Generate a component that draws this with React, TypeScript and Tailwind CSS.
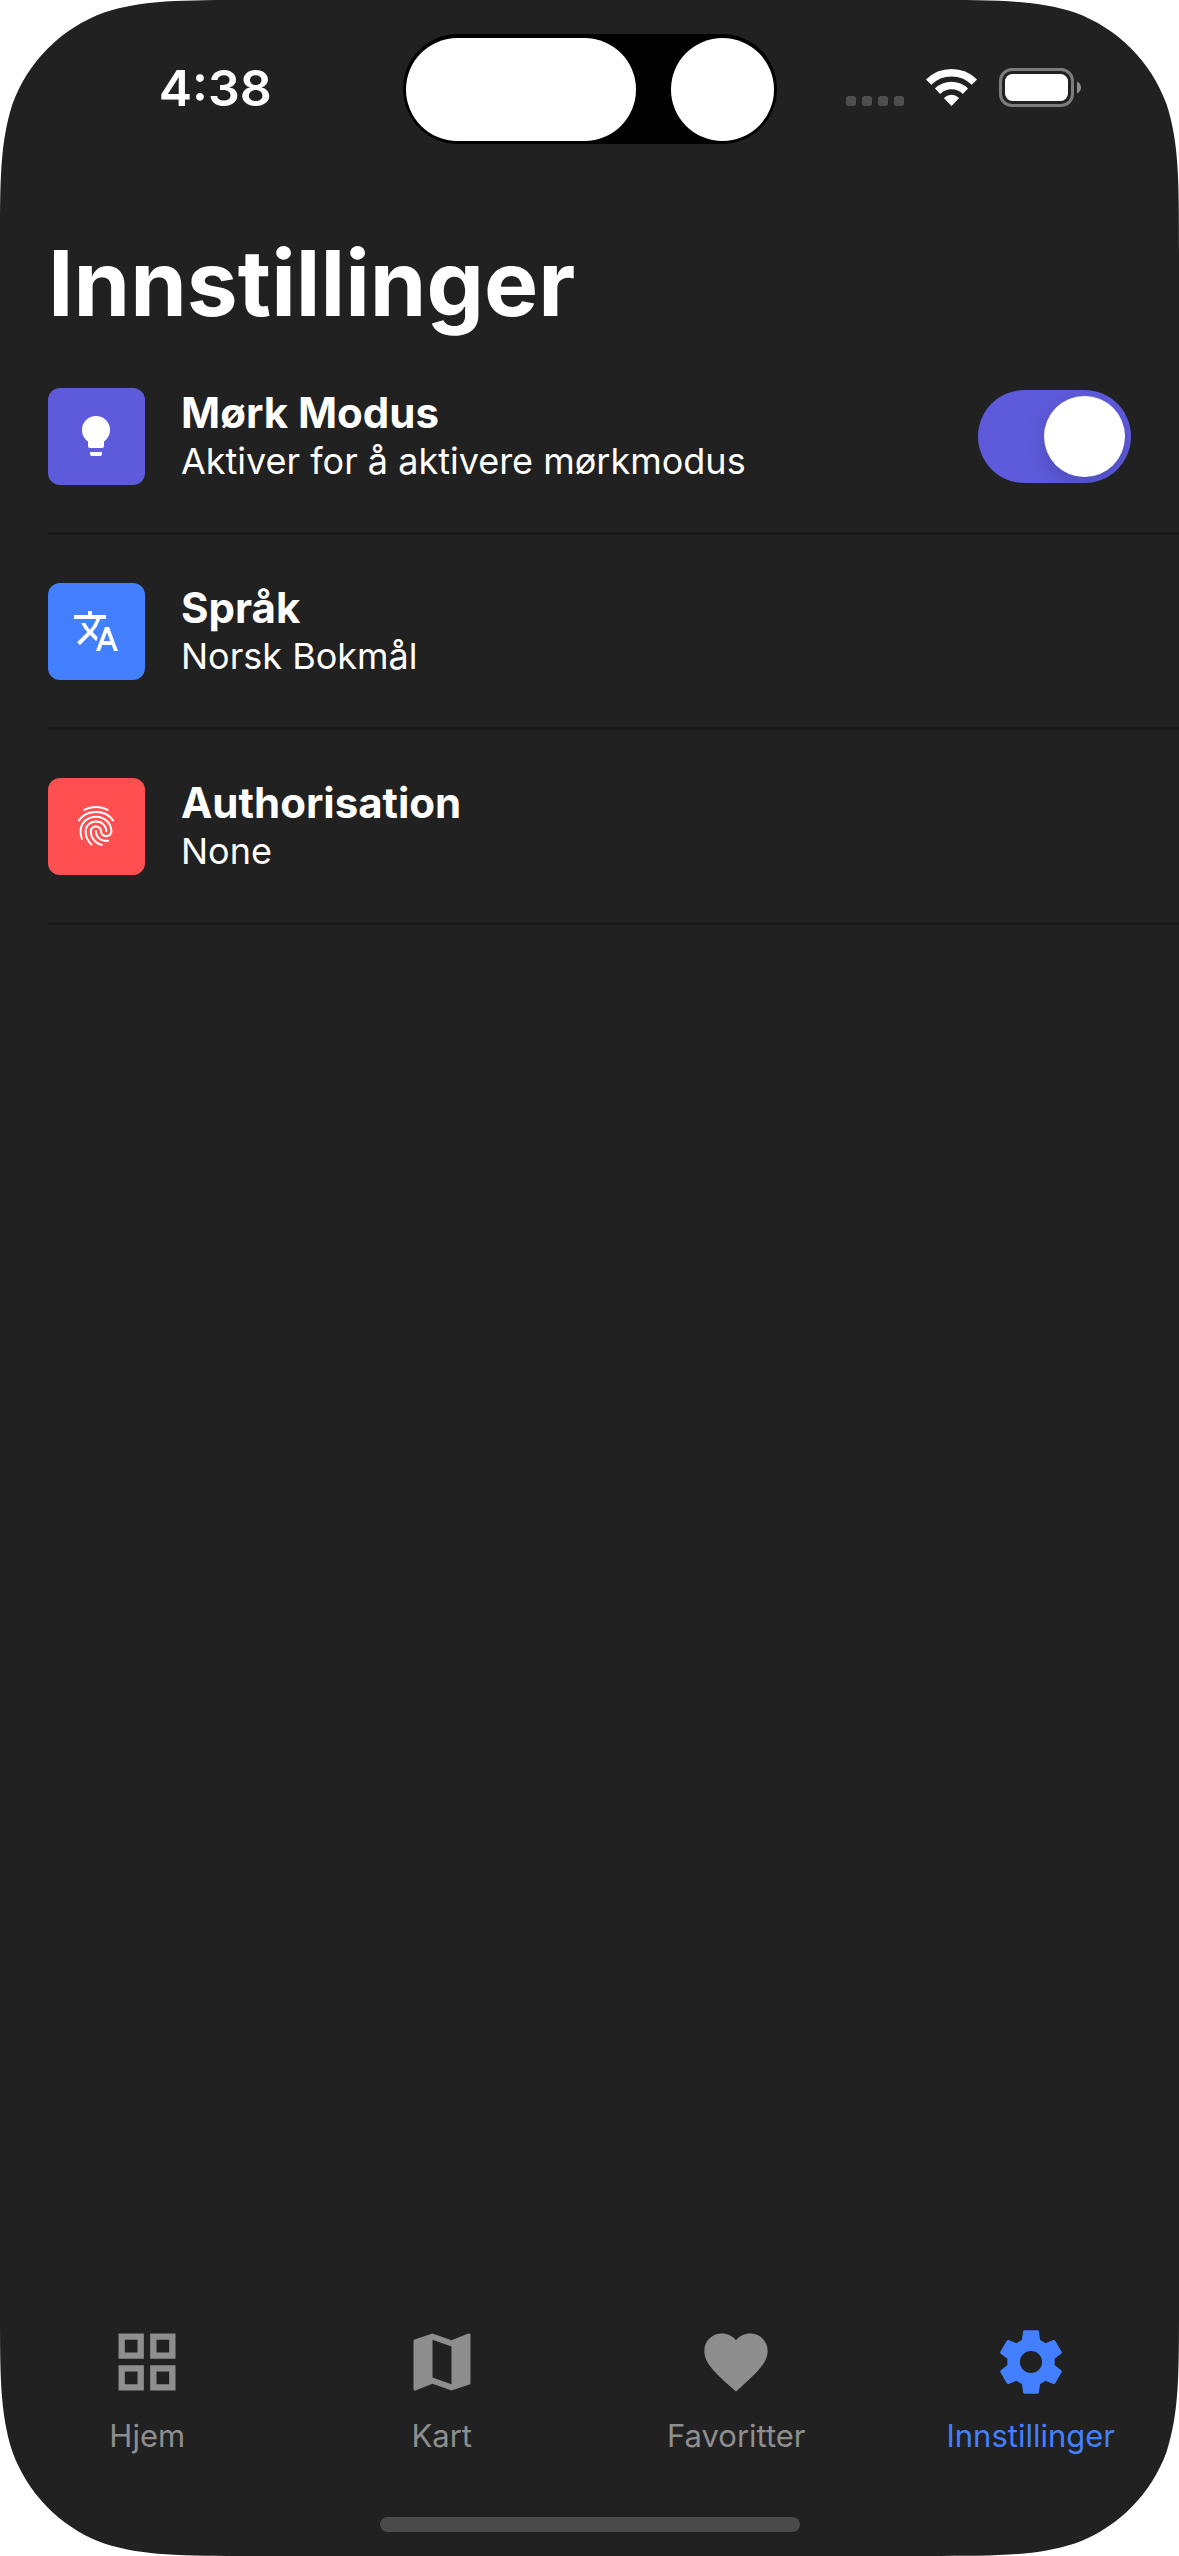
import { useState, type ReactNode } from "react";
import { MdFavorite, MdFingerprint, MdGridView, MdMap, MdTranslate } from "react-icons/md";

function LightbulbIcon() {
  return (
    <svg viewBox="0 0 24 24" fill="currentColor" className="size-12" aria-hidden="true">
      <path d="M12,2A7,7 0 0,0 5,9C5,11.38 6.19,13.47 8,14.74V17A1,1 0 0,0 9,18H15A1,1 0 0,0 16,17V14.74C17.81,13.47 19,11.38 19,9A7,7 0 0,0 12,2M9,21A1,1 0 0,0 10,22H14A1,1 0 0,0 15,21V20H9V21Z" />
    </svg>
  );
}

function CogIcon() {
  return (
    <svg viewBox="0 0 24 24" fill="currentColor" className="size-[76px]" aria-hidden="true">
      <path d="M12,15.5A3.5,3.5 0 0,1 8.5,12A3.5,3.5 0 0,1 12,8.5A3.5,3.5 0 0,1 15.5,12A3.5,3.5 0 0,1 12,15.5M19.43,12.97C19.47,12.65 19.5,12.33 19.5,12C19.5,11.67 19.47,11.34 19.43,11L21.54,9.37C21.73,9.22 21.78,8.95 21.66,8.73L19.66,5.27C19.54,5.05 19.27,4.96 19.05,5.05L16.56,6.05C16.04,5.66 15.5,5.32 14.87,5.07L14.5,2.42C14.46,2.18 14.25,2 14,2H10C9.75,2 9.54,2.18 9.5,2.42L9.13,5.07C8.5,5.32 7.96,5.66 7.44,6.05L4.95,5.05C4.73,4.96 4.46,5.05 4.34,5.27L2.34,8.73C2.21,8.95 2.27,9.22 2.46,9.37L4.57,11C4.53,11.34 4.5,11.67 4.5,12C4.5,12.33 4.53,12.65 4.57,12.97L2.46,14.63C2.27,14.78 2.21,15.05 2.34,15.27L4.34,18.73C4.46,18.95 4.73,19.03 4.95,18.95L7.44,17.94C7.96,18.34 8.5,18.68 9.13,18.93L9.5,21.58C9.54,21.82 9.75,22 10,22H14C14.25,22 14.46,21.82 14.5,21.58L14.87,18.93C15.5,18.67 16.04,18.34 16.56,17.94L19.05,18.95C19.27,19.03 19.54,18.95 19.66,18.73L21.66,15.27C21.78,15.05 21.73,14.78 21.54,14.63L19.43,12.97Z" />
    </svg>
  );
}

function WifiIcon() {
  return (
    <svg viewBox="0 0 51 37" className="h-[37px] w-[51px]" aria-hidden="true">
      <g fill="none" stroke="white" strokeWidth="7.5">
        <path d="M2.6 13.2A32.5 32.5 0 0 1 48.4 13.2" />
        <path d="M11.6 22.2A20 20 0 0 1 39.4 22.2" />
      </g>
      <path d="M25.5 37L18.3 29.6Q18 29 18.5 28.4A10.6 10.6 0 0 1 32.5 28.4Q33 29 32.7 29.6Z" fill="white" />
    </svg>
  );
}

function BatteryIcon() {
  return (
    <svg viewBox="0 0 82 39" className="h-[39px] w-[82px]" aria-hidden="true">
      <rect x="1.5" y="1.5" width="72" height="36" rx="11.5" fill="none" stroke="#7c7c7c" strokeWidth="3" />
      <rect x="6" y="6" width="63" height="27" rx="7.5" fill="white" />
      <path d="M78 13.5C80.5 14.6 82 16.8 82 19.5S80.5 24.4 78 25.5Z" fill="#8c8c8c" />
    </svg>
  );
}

function StatusBar() {
  return (
    <div className="grid grid-cols-[1fr_auto_1fr] pt-[34px]">
      <div className="flex items-center justify-center pb-0.5 pl-7">
        <time className="text-[50px] leading-[60px] font-semibold">4:38</time>
      </div>
      <div className="flex h-[110px] w-[374px] items-center justify-between rounded-full bg-black px-[3px]">
        <span className="h-[103px] w-[230px] rounded-full bg-white" />
        <span className="size-[103px] rounded-full bg-white" />
      </div>
      <div className="flex items-center justify-end pr-[98px] pb-[3px]">
        <div className="flex gap-1.5 pt-[26px]">
          <span className="size-2.5 rounded-[3px] bg-[#4e4e4e]" />
          <span className="size-2.5 rounded-[3px] bg-[#4e4e4e]" />
          <span className="size-2.5 rounded-[3px] bg-[#4e4e4e]" />
          <span className="size-2.5 rounded-[3px] bg-[#4e4e4e]" />
        </div>
        <div className="flex items-center gap-[22px] pl-[22px]">
          <WifiIcon />
          <BatteryIcon />
        </div>
      </div>
    </div>
  );
}

function RowContent({ tile, icon, title, detail }: { tile: string; icon: ReactNode; title: string; detail: string }) {
  return (
    <>
      <span className={`flex size-[97px] shrink-0 items-center justify-center rounded-xl pr-px pb-px ${tile}`}>
        {icon}
      </span>
      <span className="flex min-w-0 flex-1 flex-col pt-px">
        <span className="text-[42px] leading-[48px] font-bold">{title}</span>
        <span className="text-[36px] leading-[48px]">{detail}</span>
      </span>
    </>
  );
}

const rowClass = "flex w-full items-center gap-9 border-b-[3px] border-[#191919] pt-12 pb-[47px] text-left";

function Corner({ className }: { className: string }) {
  return (
    <svg
      viewBox="0 0 252 252"
      className={`pointer-events-none absolute size-[252px] fill-white ${className}`}
      aria-hidden="true"
    >
      <path d="M0 0H252C179.6 0 143.3 0 104.2 12.4C61.5 27.9 27.9 61.5 12.4 104.2C0 143.3 0 179.6 0 252Z" />
    </svg>
  );
}

export default function App() {
  const [dark, setDark] = useState(true);
  const [tab, setTab] = useState("Innstillinger");
  const tabs = [
    { label: "Hjem", icon: <MdGridView className="size-[76px]" /> },
    { label: "Kart", icon: <MdMap className="size-[76px]" /> },
    { label: "Favoritter", icon: <MdFavorite className="size-[76px]" /> },
    { label: "Innstillinger", icon: <CogIcon /> },
  ];

  return (
    <div className="relative flex min-h-screen flex-col overflow-hidden bg-[#212121] font-[Inter,sans-serif] text-white">
      <StatusBar />
      <main className="flex-1 pl-12">
        <h1 className="pt-[82px] text-[91px] leading-[114px] font-bold">Innstillinger</h1>
        <ul>
          <li>
            <label className={`${rowClass} cursor-pointer pr-12`}>
              <RowContent
                tile="bg-[#5d5bdb]"
                icon={<LightbulbIcon />}
                title="Mørk Modus"
                detail="Aktiver for å aktivere mørkmodus"
              />
              <input
                type="checkbox"
                role="switch"
                checked={dark}
                onChange={(e) => setDark(e.target.checked)}
                className="peer sr-only"
              />
              <span className="flex h-[93px] w-[153px] items-center overflow-hidden rounded-full bg-[#39393d] p-1.5 peer-checked:justify-end peer-checked:bg-[#5d5bdb]">
                <span className="size-[81px] rounded-full bg-white shadow-[0_9px_24px_rgba(0,0,0,0.15)]" />
              </span>
            </label>
          </li>
          <li>
            <button type="button" className={rowClass}>
              <RowContent
                tile="bg-[#4280ff]"
                icon={<MdTranslate className="size-12" />}
                title="Språk"
                detail="Norsk Bokmål"
              />
            </button>
          </li>
          <li>
            <button type="button" className={rowClass}>
              <RowContent
                tile="bg-[#ff4f50]"
                icon={<MdFingerprint className="size-12" />}
                title="Authorisation"
                detail="None"
              />
            </button>
          </li>
        </ul>
      </main>
      <nav className="grid grid-cols-4 pr-px">
        {tabs.map(({ label, icon }) => (
          <button
            key={label}
            type="button"
            aria-current={tab === label ? "page" : undefined}
            onClick={() => setTab(label)}
            className={`flex flex-col items-center gap-4 ${tab === label ? "text-[#4280ff]" : "text-[#8e8e8e]"}`}
          >
            {icon}
            <span className="text-[31px] leading-10">{label}</span>
          </button>
        ))}
      </nav>
      <div className="flex justify-center pt-[61px] pb-6">
        <span className="h-[15px] w-[420px] rounded-full bg-[#4a4a4a]" />
      </div>
      <Corner className="top-0 left-0" />
      <Corner className="top-0 right-0 -scale-x-100" />
      <Corner className="bottom-0 left-0 -scale-y-100" />
      <Corner className="right-0 bottom-0 -scale-100" />
    </div>
  );
}
